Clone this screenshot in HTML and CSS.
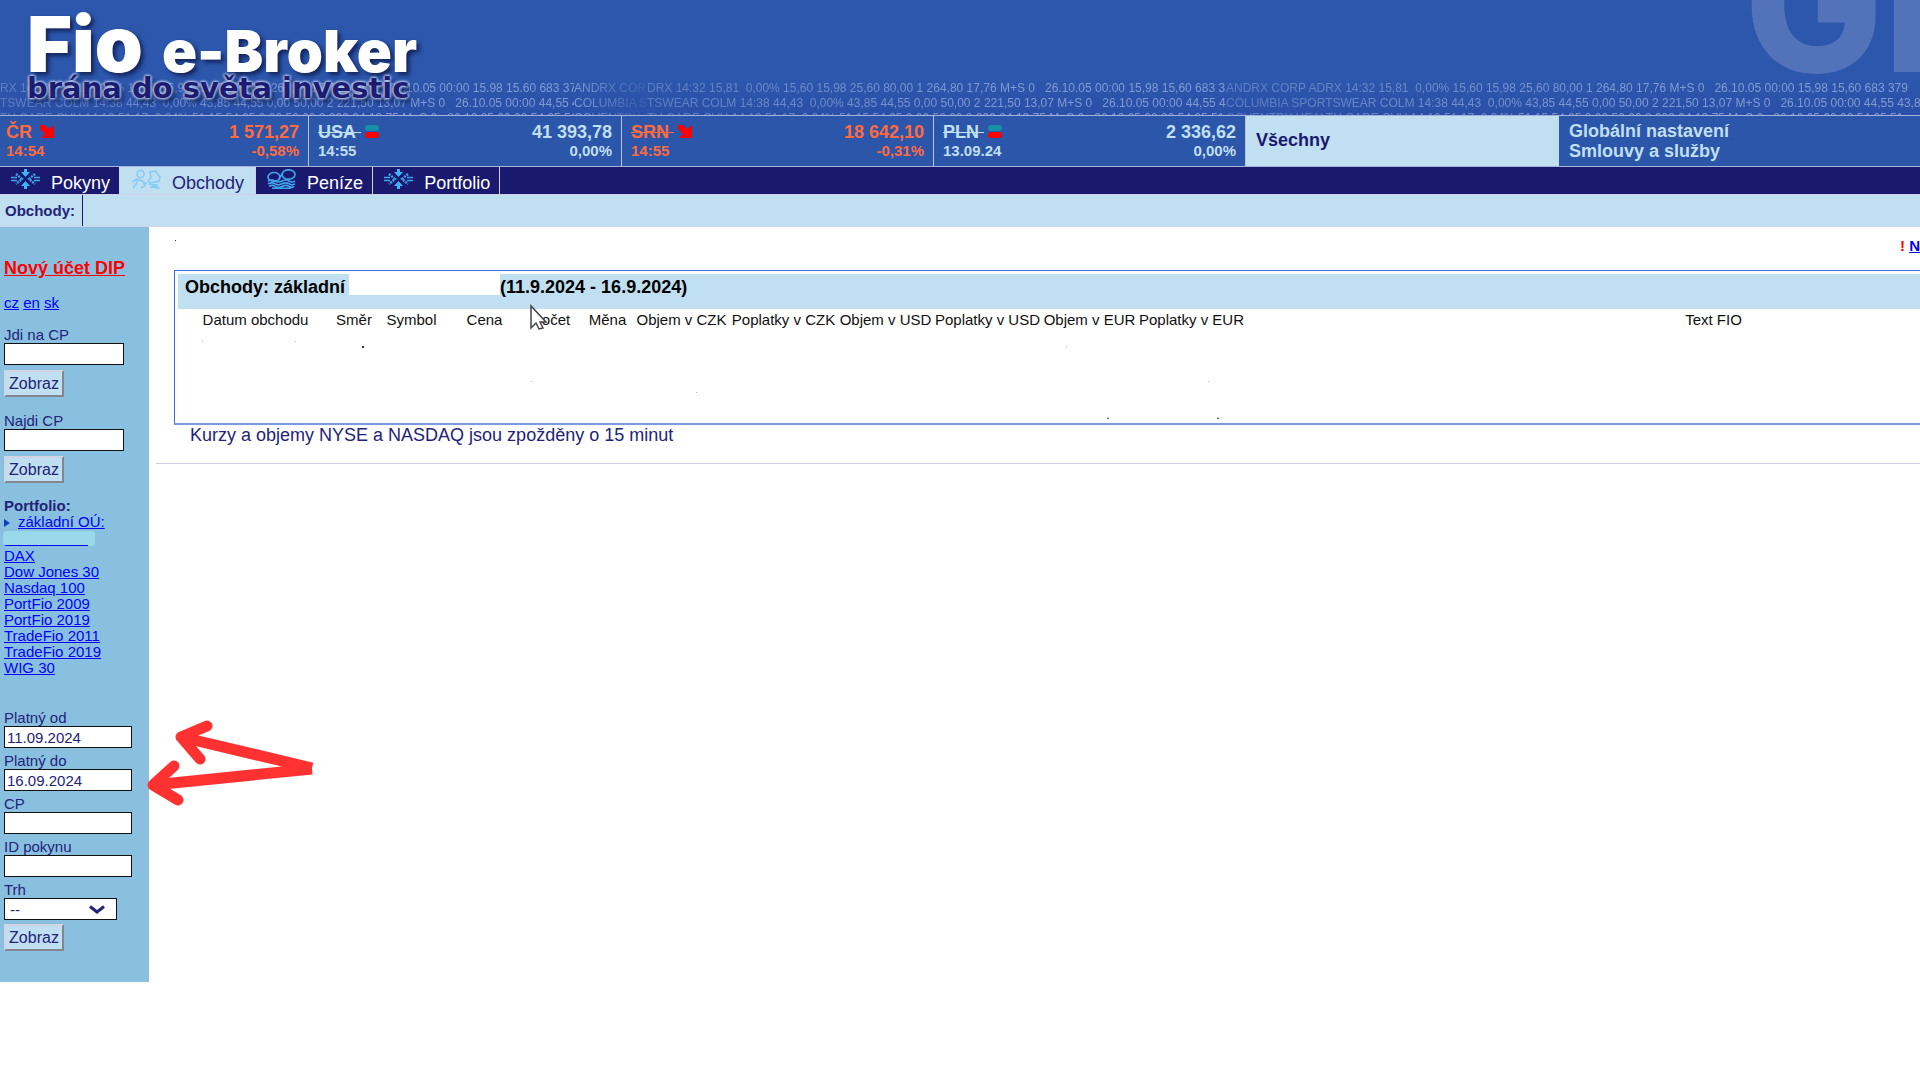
FILE: index.html
```html
<!DOCTYPE html>
<html lang="cs">
<head>
<meta charset="utf-8">
<title>Fio e-Broker</title>
<link rel="stylesheet" href="styles.css">
</head>
<body>
<svg class="defs" aria-hidden="true">
  <symbol id="i-cross" viewBox="0 0 29 20">
    <path d="M14.500 0v6M14.500 14v6" stroke="#3fb4f5" stroke-width="3"/>
    <path d="M10 3h9l-4.500 5zM10 17h9l-4.500-5z" fill="#3fb4f5"/>
    <path d="M0 8.500h6M0 11.500h6M23 8.500h6M23 11.500h6" stroke="#3fa4e8" stroke-width="1.600"/>
    <path d="M5 5l6 5-6 5M24 5l-6 5 6 5" fill="none" stroke="#3fa4e8" stroke-width="2.400" stroke-dasharray="2 1"/>
  </symbol>
  <symbol id="i-people" viewBox="0 0 29 20">
    <g fill="none" stroke="#86cdf8" stroke-width="1.600">
      <circle cx="8.500" cy="5" r="3.600"/>
      <path d="M0 13l5-3 5 2 5 3M6 11l-2 4-3 4M11 13l2 4-4 2"/>
      <path d="M18 3l5-1 5 6-1 4-9 2-2-2 3-4z"/>
      <path d="M17 15l4 1M22 15l2 4h4"/>
    </g>
    <path d="M21 15h4l2 4h-9z" fill="#86cdf8"/>
  </symbol>
  <symbol id="i-coins" viewBox="0 0 29 20">
    <g fill="none" stroke="#3fa4e8" stroke-width="1.700">
      <ellipse cx="7" cy="8" rx="6" ry="4.500"/>
      <ellipse cx="21.500" cy="5.500" rx="6.500" ry="4.700"/>
      <path d="M12 10q2-4 4-6"/>
      <path d="M1 12q4-2 7 0t7 0 7 0 6 0M1 14.800q4-2 7 0t7 0 7 0 6 0M2 17.400q3-2 6 0t7 0 7 0 5 0M5 19.400h19"/>
    </g>
  </symbol>
  <symbol id="i-down" viewBox="0 0 14 13"><path d="M0 0h4.500l5 4L14 0v13H1l4-4-5-5z" fill="#f00"/></symbol>
  <symbol id="i-flat" viewBox="0 0 14 13"><rect width="14" height="6" rx="3" fill="#1590a8"/><rect y="7" width="14" height="6" rx="3" fill="#f00"/></symbol>
</svg>

<header class="banner">
  <div class="ghost" aria-hidden="true">GL</div>
  <div class="tape" aria-hidden="true">
    <div class="segment"><p>RX 14:32 15,81&nbsp; 0,00% 15,60 15,98 25,60 80,00 1 264,80 17,76 M+S 0&nbsp;&nbsp; 26.10.05 00:00 15.98 15.60 683 379</p><p>TSWEAR COLM 14:38 44,43&nbsp; 0,00% 43,85 44,55 0,00 50,00 2 221,50 13,07 M+S 0&nbsp;&nbsp; 26.10.05 00:00 44,55 43</p><p>TH CARE CVH 14:19 51,17&nbsp; 0,34% 51,15 54,95 0,00 50,00 2 999,94 13,75 M+S 0&nbsp;&nbsp; 26.10.05 00:00 54,95 51</p></div>
    <div class="segment"><p>ANDRX CORP</p><p>COLUMBIA SP</p><p>COVENTRY H</p></div>
    <div class="segment"><p>DRX 14:32 15,81&nbsp; 0,00% 15,60 15,98 25,60 80,00 1 264,80 17,76 M+S 0&nbsp;&nbsp; 26.10.05 00:00 15,98 15,60 683 379</p><p>TSWEAR COLM 14:38 44,43&nbsp; 0,00% 43,85 44,55 0,00 50,00 2 221,50 13,07 M+S 0&nbsp;&nbsp; 26.10.05 00:00 44,55 43</p><p>TH CARE CVH 14:19 51,17&nbsp; 0,34% 51,15 54,95 0,00 50,00 2 999,94 13,75 M+S 0&nbsp;&nbsp; 26.10.05 00:00 54,95 51</p></div>
    <div class="segment"><p>ANDRX CORP ADRX 14:32 15,81&nbsp; 0,00% 15,60 15,98 25,60 80,00 1 264,80 17,76 M+S 0&nbsp;&nbsp; 26.10.05 00:00 15,98 15,60 683 379</p><p>COLUMBIA SPORTSWEAR COLM 14:38 44,43&nbsp; 0,00% 43,85 44,55 0,00 50,00 2 221,50 13,07 M+S 0&nbsp;&nbsp; 26.10.05 00:00 44,55 43,85</p><p>COVENTRY HEALTH CARE CVH 14:19 51,17&nbsp; 0,34% 51,15 54,95 0,00 50,00 2 999,94 13,75 M+S 0&nbsp;&nbsp; 26.10.05 00:00 54,95 51</p></div>
  </div>
  <div class="brand">
    <h1 class="logo"><span class="logo-fio">Fio</span><span class="logo-app">e-Broker</span></h1>
    <p class="slogan">brána do světa investic</p>
  </div>
</header>

<section class="tickers">
  <div class="ticker falling">
    <div><strong>ČR</strong><svg class="trend"><use href="#i-down"/></svg><small>14:54</small></div>
    <div class="value"><strong>1 571,27</strong><small>-0,58%</small></div>
  </div>
  <div class="ticker">
    <div><strong><s>USA&nbsp;</s></strong><svg class="trend"><use href="#i-flat"/></svg><small>14:55</small></div>
    <div class="value"><strong>41 393,78</strong><small>0,00%</small></div>
  </div>
  <div class="ticker falling">
    <div><strong><s>SRN&nbsp;</s></strong><svg class="trend"><use href="#i-down"/></svg><small>14:55</small></div>
    <div class="value"><strong>18 642,10</strong><small>-0,31%</small></div>
  </div>
  <div class="ticker">
    <div><strong><s>PLN&nbsp;</s></strong><svg class="trend"><use href="#i-flat"/></svg><small>13.09.24</small></div>
    <div class="value"><strong>2 336,62</strong><small>0,00%</small></div>
  </div>
  <a class="all" href="#">Všechny</a>
  <div class="settings"><a href="#">Globální nastavení</a><a href="#">Smlouvy a služby</a></div>
</section>

<nav class="tabs">
  <a class="tab" href="#"><svg class="tab-icon"><use href="#i-cross"/></svg>Pokyny</a>
  <a class="tab active" href="#"><svg class="tab-icon"><use href="#i-people"/></svg>Obchody</a>
  <a class="tab" href="#"><svg class="tab-icon"><use href="#i-coins"/></svg>Peníze</a>
  <a class="tab" href="#"><svg class="tab-icon"><use href="#i-cross"/></svg>Portfolio</a>
</nav>
<div class="subnav"><span class="subnav-title">Obchody:</span></div>

<div class="page">
  <aside class="sidebar">
    <a class="promo" href="#">Nový účet DIP</a>
    <div class="langs"><a href="#">cz</a> <a href="#">en</a> <a href="#">sk</a></div>
    <form class="lookup">
      <label for="goto">Jdi na CP</label>
      <input id="goto" type="text">
      <button type="button">Zobraz</button>
    </form>
    <form class="lookup">
      <label for="find">Najdi CP</label>
      <input id="find" type="text">
      <button type="button">Zobraz</button>
    </form>
    <div class="portfolios">
      <strong>Portfolio:</strong>
      <a class="current" href="#">základní OÚ:</a>
      <span class="hidden-account"></span>
      <a href="#">DAX</a>
      <a href="#">Dow Jones 30</a>
      <a href="#">Nasdaq 100</a>
      <a href="#">PortFio 2009</a>
      <a href="#">PortFio 2019</a>
      <a href="#">TradeFio 2011</a>
      <a href="#">TradeFio 2019</a>
      <a href="#">WIG 30</a>
    </div>
    <form class="filter">
      <div class="field"><label for="from">Platný od</label><input id="from" type="text" value="11.09.2024"></div>
      <div class="field"><label for="to">Platný do</label><input id="to" type="text" value="16.09.2024"></div>
      <div class="field"><label for="cp">CP</label><input id="cp" type="text"></div>
      <div class="field"><label for="order">ID pokynu</label><input id="order" type="text"></div>
      <div class="field"><label for="market">Trh</label>
        <div class="select"><select id="market"><option>--</option></select><svg class="chevron" viewBox="0 0 16 9"><path d="M1 1.500l7 5.500 7-5.500" fill="none" stroke="#23237a" stroke-width="3"/></svg></div>
      </div>
      <button type="button">Zobraz</button>
    </form>
  </aside>

  <main class="content">
    <div class="notice"><span>!</span> <a href="#">N</a></div>
    <section class="panel">
      <h2 class="panel-title">Obchody: základní<span class="hidden-name"></span>(11.9.2024 - 16.9.2024)</h2>
      <table class="trades">
        <colgroup><col class="w-date"><col class="w-side"><col class="w-mid"><col class="w-mid"><col class="w-count"><col class="w-cur"><col class="w-vol"><col class="w-fee"><col class="w-vol"><col class="w-fee"><col class="w-vol"><col class="w-fee"><col></colgroup>
        <thead><tr><th>Datum obchodu</th><th>Směr</th><th>Symbol</th><th>Cena</th><th>Počet</th><th>Měna</th><th>Objem v CZK</th><th>Poplatky v CZK</th><th>Objem v USD</th><th>Poplatky v USD</th><th>Objem v EUR</th><th>Poplatky v EUR</th><th class="note">Text FIO</th></tr></thead>
      </table>
    </section>
    <p class="delay">Kurzy a objemy NYSE a NASDAQ jsou zpožděny o 15 minut</p>
    <hr class="rule">
  </main>

  <svg class="marks" width="1100" height="600" aria-hidden="true">
    <g fill="none" stroke="#ff3131" stroke-width="11" stroke-linejoin="round">
      <path d="M312 541L181 510M312 542L153 558"/>
      <path d="M207 499l-26 11 19 22M174 539l-21 19 25 15" stroke-linecap="round"/>
    </g>
    <path d="M531 79v22l5-5 3 6 4-1-3-6h6z" fill="#fff" stroke="#44444c" stroke-width="1.500"/>
    <path d="M175 13h1v1h-1zM362 119h2v2h-2zM1107 192h2l-1-2zM1217 192h2l-1-2z" fill="#333"/>
    <path d="M202 114h1v1h-1zM295 114h1v1h-1zM531 154h1v1h-1zM696 165h1v1h-1zM1066 119h1v1h-1zM1208 154h1v1h-1z" fill="#9cc4dc"/>
  </svg>
</div>
</body>
</html>
```
FILE: styles.css
```css
* { box-sizing: border-box; }

body {
  margin: 0;
  background: #fff;
  color: #23237a;
  font: 15px/17px "Liberation Sans", Arial, sans-serif;
  overflow-x: hidden;
}

p, h1, h2 { margin: 0; }
a { color: #00f; }
.defs { display: none; }

/* Banner */
.banner {
  position: relative;
  height: 116px;
  background: linear-gradient(#2c57ac 70%, #2a4fa8);
  border-bottom: 1px solid #a9b3d9;
  overflow: hidden;
}
.ghost {
  position: absolute;
  right: -68px;
  bottom: 17px;
  color: #5273ba;
  font: 800 185px/185px Inter, sans-serif;
}
.tape {
  position: absolute;
  inset: 81px 0 0;
  display: grid;
  grid-template-columns: 574px 73px 579px 1fr;
  color: #a6b8e0;
  font-size: 12px;
  line-height: 15px;
  white-space: nowrap;
}
.segment {
  overflow: hidden;
  mask-image: linear-gradient(90deg, rgba(0, 0, 0, .4), rgba(0, 0, 0, .7) 60%);
}
.segment:nth-child(2) { mask-image: linear-gradient(90deg, rgba(0, 0, 0, .7), rgba(0, 0, 0, .1)); }
.brand { position: relative; padding: 6px 27px; }
.logo {
  display: flex;
  align-items: baseline;
  gap: 19px;
  color: #fff;
  font: 900 77px/76px Inter, sans-serif;
  text-shadow: 3px 3px 4px #14245c;
}
.logo-app { font-size: 58px; }
.slogan {
  margin-top: -16px;
  color: #1c1c72;
  font: bold 29px/30px "DejaVu Sans", sans-serif;
  text-shadow: 0 0 3px #c9d4f2, 0 0 3px #c9d4f2, 0 0 3px #c9d4f2, 3px 4px 4px #14245c;
}

/* Index tickers */
.tickers {
  display: grid;
  grid-template-columns: 309px 313px repeat(2, 312px) 313px 1fr;
  min-height: 51px;
  background: #2b56aa;
  border-bottom: 1px solid #a9b3d9;
  font-size: 18px;
  line-height: 20px;
  font-weight: bold;
}
.ticker {
  display: flex;
  justify-content: space-between;
  padding: 6px 9px;
  border-right: 1px solid #b9c1e0;
  color: #c0dff0;
}
.ticker:first-child { padding-left: 6px; }
.falling { color: #ff6a3f; }
.ticker small { display: block; font-size: 15px; line-height: 17px; }
.value { text-align: right; }
.trend { width: 14px; height: 13px; margin-left: 4px; }
.falling:first-child .trend { margin-left: 8px; }
.all {
  display: flex;
  align-items: center;
  padding: 0 10px 2px;
  background: #c0dff0;
  color: #191970;
  text-decoration: none;
}
.settings { display: flex; flex-direction: column; padding: 5px 10px 4px; }
.settings a { color: #c0dff0; text-decoration: none; }

/* Main tabs */
.tabs {
  display: flex;
  height: 28px;
  background: #191970;
  border-bottom: 1px solid #d3cfe6;
  font-size: 18px;
}
.tab {
  display: flex;
  gap: 11px;
  padding: 0 9px 0 11px;
  border-right: 1px solid #d3cfe6;
  color: #fff;
  line-height: 32px;
  text-decoration: none;
}
.tab:first-child { border-right: 0; }
.tab-icon { width: 29px; height: 20px; margin-top: 2px; }
.tab.active { padding: 0 11px 0 13px; background: #c0dff0; color: #23237a; }
.subnav {
  display: flex;
  height: 32px;
  background: #c0dff0;
  border-bottom: 1px solid #cdd3e8;
  font-weight: bold;
}
.subnav-title { padding: 7px 7px 0 5px; border-right: 1px solid #191970; }

.page { position: relative; display: flex; align-items: flex-start; }

/* Sidebar */
.sidebar {
  flex: none;
  width: 149px;
  padding: 31px 4px 31px;
  background: #8ac0df;
}
.promo { display: block; color: #f00; font-size: 18px; line-height: 20px; font-weight: bold; white-space: nowrap; }
.langs { margin-top: 16px; }
.lookup { margin-top: 15px; }
label { display: block; }
input, select {
  display: block;
  width: 128px;
  height: 22px;
  padding: 0 2px;
  border: 1px solid #111;
  border-radius: 0;
  background: #fff;
  color: #23237a;
  font: inherit;
}
.lookup input { width: 120px; }
button {
  display: block;
  width: 60px;
  height: 27px;
  margin-top: 5px;
  padding: 0;
  border: 2px outset #d3d3e4;
  background: #c0dff0;
  color: #23237a;
  font: 16px/18px "Liberation Sans", Arial, sans-serif;
}
.filter button { margin-top: 4px; }
.portfolios { display: grid; margin-top: 15px; line-height: 16px; justify-items: start; }
.current { position: relative; margin-left: 14px; }
.current::before {
  content: "";
  position: absolute;
  left: -14px;
  top: 5px;
  border: solid transparent;
  border-width: 4px 0 4px 6px;
  border-left-color: #0c3fc0;
}
.hidden-account {
  width: 92px;
  height: 15px;
  margin: 1px 0 2px -1px;
  border-radius: 4px;
  background: linear-gradient(#00f, #00f) 1px 100% / 84px 1px no-repeat, #9ad9ea;
}
.filter { margin-top: 33px; }
.field + .field { margin-top: 4px; }
.select { position: relative; width: 113px; }
.select select { width: 100%; padding: 0 5px; appearance: none; }
.chevron { position: absolute; right: 12px; top: 7px; width: 16px; height: 9px; }

/* Trades */
.content { flex: 1; min-width: 0; padding-left: 7px; }
.notice {
  height: 43px;
  padding-top: 10px;
  color: #f00;
  font-weight: bold;
  text-align: right;
}
.panel {
  min-height: 155px;
  margin-left: 18px;
  padding: 3px 0 0 3px;
  border: solid #4169e1;
  border-width: 1px 0 2px 1px;
  border-bottom-color: #7a99e6;
}
.panel-title {
  display: flex;
  height: 35px;
  padding-left: 7px;
  background: #c0dff0;
  color: #000;
  font-size: 18px;
  line-height: 27px;
}
.hidden-name { width: 151px; height: 21px; margin-left: 4px; background: #fff; }
.trades { width: 100%; table-layout: fixed; border-collapse: collapse; }
th { padding: 2px 0; color: #111; font-weight: normal; white-space: nowrap; }
.w-date { width: 155px; }
.w-side { width: 42px; }
.w-mid { width: 73px; }
.w-count { width: 60px; }
.w-cur { width: 53px; }
.w-vol { width: 95px; }
.w-fee { width: 109px; }
.note { padding-left: 261px; }
.delay { margin-left: 34px; font-size: 18px; line-height: 20px; }
.rule { margin: 18px 0 0; border: 0; border-top: 1px solid #c9cde6; }

/* Hand-drawn pointers laid over the page */
.marks { position: absolute; left: 0; top: 0; overflow: visible; pointer-events: none; }
```
